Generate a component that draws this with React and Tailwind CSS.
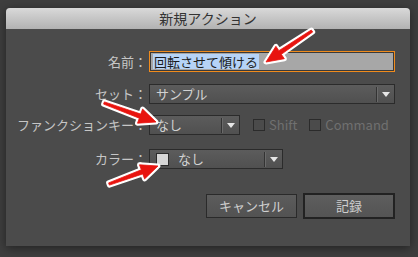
import React from 'react';

const FONT = { fontFamily: '"Noto Sans CJK JP", "Noto Sans", sans-serif' };

function arrowPoints([tx, ty], [hx, hy]) {
  const dx = hx - tx;
  const dy = hy - ty;
  const len = Math.hypot(dx, dy);
  const ux = dx / len;
  const uy = dy / len;
  const nx = -uy;
  const ny = ux;
  const headLen = 17;
  const headW = 7.5;
  const bx = hx - ux * headLen;
  const by = hy - uy * headLen;
  const pts = [
    [tx + nx * 1.2, ty + ny * 1.2],
    [bx + nx * 2.2, by + ny * 2.2],
    [bx + nx * headW, by + ny * headW],
    [hx, hy],
    [bx - nx * headW, by - ny * headW],
    [bx - nx * 2.2, by - ny * 2.2],
    [tx - nx * 1.2, ty - ny * 1.2],
  ];
  return pts.map((p) => p.map((v) => v.toFixed(1)).join(',')).join(' ');
}

const ARROWS = [
  [[312, 31], [266, 62]],
  [[104, 103], [156, 122]],
  [[109, 184], [158, 166]],
];

function Arrows() {
  return (
    <svg className="pointer-events-none absolute inset-0" width="418" height="257">
      {ARROWS.map(([t, h], i) => (
        <polygon
          key={`w${i}`}
          points={arrowPoints(t, h)}
          fill="#fff"
          stroke="#fff"
          strokeWidth="5"
          strokeLinejoin="round"
        />
      ))}
      {ARROWS.map(([t, h], i) => (
        <polygon key={`r${i}`} points={arrowPoints(t, h)} fill="#e8140f" stroke="#e8140f" strokeWidth="0.8" strokeLinejoin="round" />
      ))}
    </svg>
  );
}

function Caret() {
  return (
    <div className="flex h-full items-center">
      <div className="h-[15px] w-px bg-[#333]" />
      <div className="h-[15px] w-px bg-[#6a6a6a]" />
      <svg width="16" height="8" viewBox="0 0 16 8">
        <path d="M4 2h8l-4 5z" fill="#e6e6e6" />
      </svg>
    </div>
  );
}

function Select({ width, children }) {
  return (
    <div
      className="flex h-[20px] items-center border border-[#2b2b2b] bg-gradient-to-b from-[#5c5c5c] to-[#505050] pl-[6px]"
      style={{ width }}
    >
      <div className="flex flex-1 items-center gap-2 text-[13px] text-[#d2d2d2]">{children}</div>
      <Caret />
    </div>
  );
}

function Label({ children }) {
  return <div className="w-[143px] pr-[2px] text-right text-[13px] text-[#c6c6c6]">{children}</div>;
}

function Check({ label }) {
  return (
    <div className="flex items-center gap-[4px] text-[13px] text-[#707070]">
      <div className="h-[12px] w-[12px] border border-[#2b2b2b] bg-[#4b4b4b]" />
      {label}
    </div>
  );
}

export default function App() {
  return (
    <div className="relative h-[257px] w-[418px] overflow-hidden bg-[#3e3e3e] pl-[6px] pt-[8px]" style={FONT}>
      <div className="flex h-[238px] w-[404px] flex-col rounded-t-[4px] bg-[#4b4b4b] shadow-[0_2px_10px_rgba(0,0,0,0.45)]">
        <div className="flex h-[21px] items-center justify-center rounded-t-[4px] bg-gradient-to-b from-[#d9d9d9] to-[#b2b2b2] text-[14px] text-[#333]">
          新規アクション
        </div>

        <div className="flex flex-col pt-[22px]">
          <div className="flex items-center">
            <Label>名前：</Label>
            <div className="flex h-[21px] w-[246px] items-center border border-[#f08b1c] bg-[#a7a7a7] pl-[3px] outline outline-1 -outline-offset-2 outline-[#3a3a3a]">
              <span className="bg-[#b6d3f7] px-[1px] text-[13px] leading-[15px] text-[#1c1c1c]">回転させて傾ける</span>
            </div>
          </div>

          <div className="mt-[12px] flex items-center">
            <Label>セット：</Label>
            <Select width={246}>サンプル</Select>
          </div>

          <div className="mt-[11px] flex items-center">
            <Label>ファンクションキー：</Label>
            <Select width={91}>なし</Select>
            <div className="ml-[13px] flex gap-[12px]">
              <Check label="Shift" />
              <Check label="Command" />
            </div>
          </div>

          <div className="mt-[14px] flex items-center">
            <Label>カラー：</Label>
            <Select width={134}>
              <div className="h-[13px] w-[13px] border border-[#2b2b2b] bg-[#d6d6d6]" />
              <span className="ml-[1px]">なし</span>
            </Select>
          </div>

          <div className="mt-[24px] flex items-center justify-end gap-[6px] pr-[15px]">
            <div className="flex h-[24px] w-[91px] items-center justify-center border border-[#2a2a2a] bg-gradient-to-b from-[#5c5c5c] to-[#525252] text-[13px] text-[#cfcfcf]">
              キャンセル
            </div>
            <div className="flex h-[26px] w-[92px] items-center justify-center border-2 border-[#222] bg-gradient-to-b from-[#5e5e5e] to-[#545454] text-[13px] text-[#cfcfcf]">
              記録
            </div>
          </div>
        </div>
      </div>
      <Arrows />
    </div>
  );
}
